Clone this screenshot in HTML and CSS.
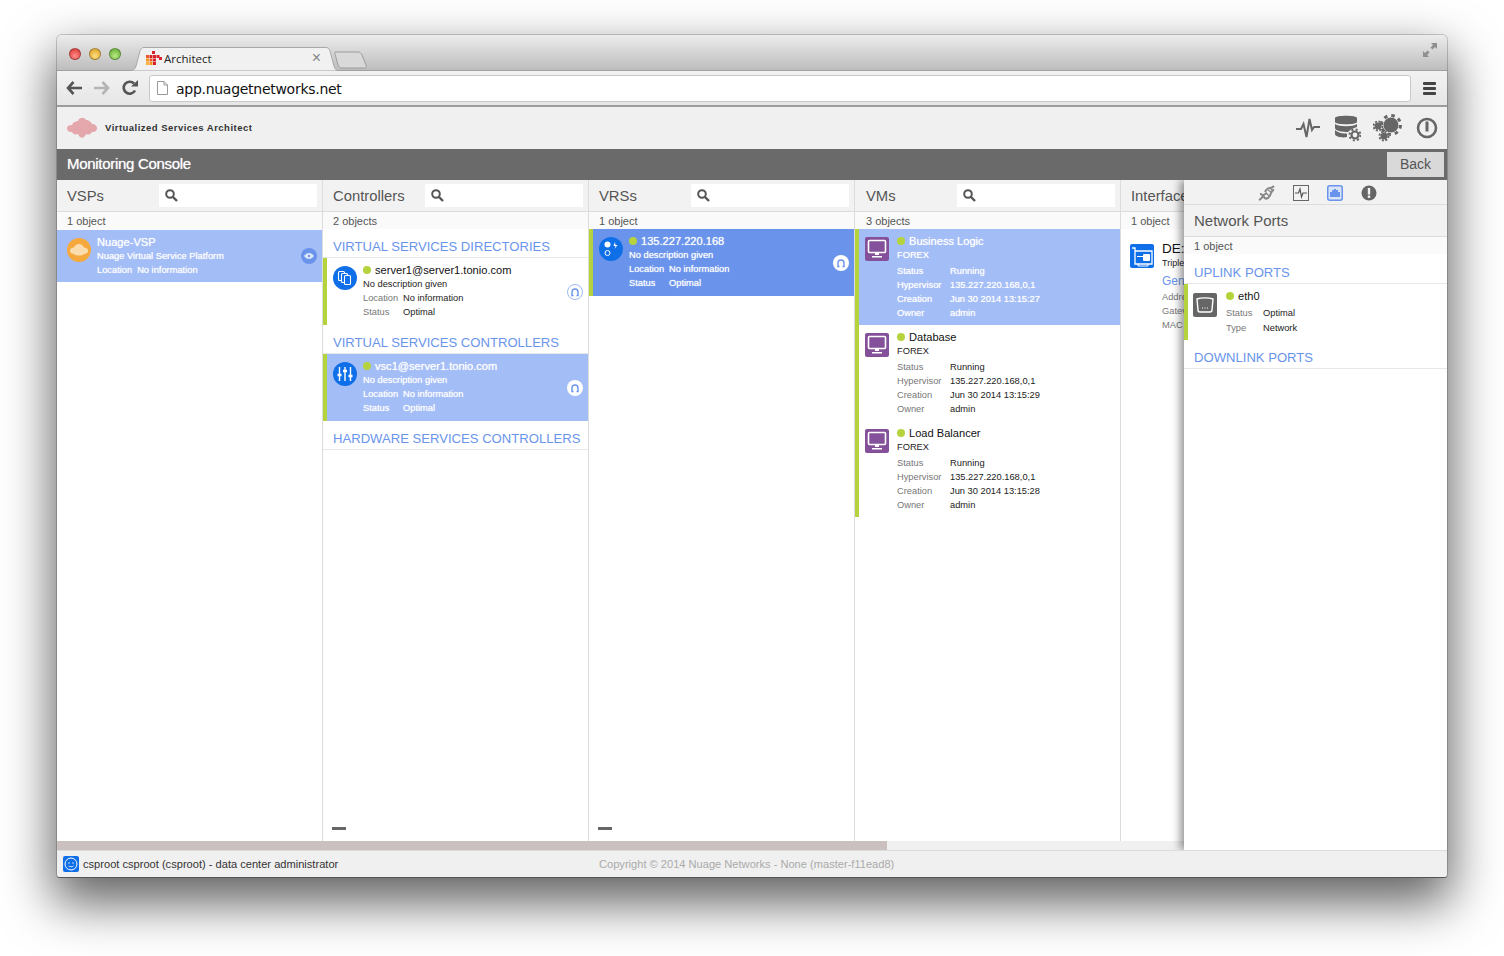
FILE: index.html
```html
<!DOCTYPE html>
<html lang="en">
<head>
<meta charset="utf-8">
<title>Architect</title>
<link rel="stylesheet" href="styles.css">
</head>
<body>
<div class="window">
  <div class="titlebar">
    <div class="lights"><i class="light red"></i><i class="light yellow"></i><i class="light green"></i></div>
    <div class="tab">
      <svg class="tab-shape" width="208" height="24" viewBox="0 0 208 24"><path d="M0 23.500C4 23.500 5 22 6 19L10 4C11 1.500 12 .5 14 .5H196C198 .5 199 1.500 200 4L204 19C205 22 206 23.500 208 23.500" fill="#f1f1f1" stroke="#a8a8a8"/></svg>
      <svg class="favicon" width="16" height="14" viewBox="0 0 16 14"><g fill="#d8232a"><rect x="6" y="0" width="3" height="3"/><rect x="0" y="4" width="3" height="3" fill="#f05a28"/><rect x="3.5" y="4" width="3" height="3"/><rect x="7" y="4" width="3" height="3"/><rect x="10.500" y="4" width="3" height="3"/><rect x="0" y="7.500" width="3" height="3" fill="#f7941d"/><rect x="3.500" y="7.500" width="3" height="3" fill="#f05a28"/><rect x="7" y="7.500" width="3" height="3"/><rect x="13" y="6" width="3" height="3"/><rect x="0" y="11" width="3" height="3" fill="#fbb040"/><rect x="3.500" y="11" width="3" height="3" fill="#f7941d"/><rect x="7" y="11" width="3" height="3" fill="#d8232a"/></g></svg>
      <span class="tab-title">Architect</span>
      <span class="tab-close">×</span>
    </div>
    <svg class="newtab" width="34" height="18" viewBox="0 0 34 18"><path d="M1 1H24C26 1 27 2 28 4L32 14C33 16 32 17 30 17H8C6 17 5 16 4 14L1 3C.6 2 .5 1 1 1Z" fill="#d9d9d9" stroke="#9c9c9c"/></svg>
    <svg class="fullscreen" width="14" height="14" viewBox="0 0 14 14"><path d="M8 0H14V6L12 4 9.500 6.500 7.500 4.500 10 2ZM6 14H0V8L2 10 4.500 7.500 6.500 9.500 4 12Z" fill="#8f8f8f"/></svg>
  </div>

  <div class="toolbar">
    <svg class="nav" width="16" height="14" viewBox="0 0 16 14"><path d="M7.500 1 2 7l5.500 6M2.500 7H16" fill="none" stroke="#555" stroke-width="2.600"/></svg>
    <svg class="nav" width="16" height="14" viewBox="0 0 16 14"><path d="M8.500 1 14 7l-5.500 6M13.500 7H0" fill="none" stroke="#b4b4b4" stroke-width="2.600"/></svg>
    <svg class="nav" width="16" height="16" viewBox="0 0 16 16"><path d="M13 10.500A6 6 0 1 1 12 3.500" fill="none" stroke="#555" stroke-width="2.600"/><path d="M9 6.500H16V0Z" fill="#555"/></svg>
    <div class="omnibox">
      <svg width="11" height="14" viewBox="0 0 11 14"><path d="M.5.500H7L10.500 4V13.500H.5ZM7 .5V4H10.500" fill="#fff" stroke="#9a9a9a"/></svg>
      <span class="url">app.nuagetnetworks.net</span>
    </div>
    <div class="menu"><i></i><i></i><i></i></div>
  </div>

  <header class="appbar">
    <svg class="logo" width="31" height="22" viewBox="0 0 31 22">
      <defs>
        <pattern id="dots" width="2" height="2" patternUnits="userSpaceOnUse"><rect x=".4" y=".4" width="1.200" height="1.200" fill="#cf2630"/></pattern>
      </defs>
      <path d="M0 11C0 9 2 8 5 8 6 5 9 4 11 4 12 0 18 0 19 3 22 3 24 5 25 7 28 7 30 9 30 11 30 14 28 15 25 15 23 18 21 18 19 17 17 22 13 22 11 17 8 18 6 17 5 15 2 15 0 14 0 11Z" fill="url(#dots)"/>
    </svg>
    <span class="brand">Virtualized Services Architect</span>
    <div class="app-icons">
      <svg width="26" height="22" viewBox="0 0 26 22"><path d="M1 12H6L8.500 7 11.500 20 14.500 2 17 13 19 10H25" fill="none" stroke="#666" stroke-width="2"/></svg>
      <svg class="db" width="27" height="28" viewBox="-1 0 27 28"><g fill="#666"><path d="M0 4C0 1 22 1 22 4V8C22 11 0 11 0 8Z"/><path d="M0 10C4 13 18 13 22 10V13C18 14 15 16 13 18 8 18 0 17 0 14Z"/><path d="M0 16C3 19 8 19.500 12 19.500L12 23C8 24 0 23 0 20Z"/></g><circle cx="20" cy="21" r="3.500" fill="none" stroke="#666" stroke-width="2.200"/><circle cx="20" cy="21" r="5.500" fill="none" stroke="#666" stroke-width="2" stroke-dasharray="2 2.320"/></svg>
      <svg width="30" height="28" viewBox="0 0 30 28"><circle cx="18" cy="11" r="7.500" fill="#666"/><circle cx="18" cy="11" r="9.500" fill="none" stroke="#666" stroke-width="3" stroke-dasharray="3.500 3.960"/><circle cx="5" cy="12" r="3.500" fill="#666"/><circle cx="5" cy="12" r="4.500" fill="none" stroke="#666" stroke-width="2" stroke-dasharray="2 1.530"/><circle cx="11" cy="22" r="3.500" fill="#666"/><circle cx="11" cy="22" r="4.500" fill="none" stroke="#666" stroke-width="2" stroke-dasharray="2 1.530"/></svg>
      <svg width="22" height="22" viewBox="0 0 22 22"><circle cx="11" cy="11" r="9" fill="none" stroke="#666" stroke-width="2.600"/><rect x="9.500" y="4.500" width="3" height="10" fill="#666"/></svg>
    </div>
  </header>

  <div class="consolebar">
    <h1 class="console-title">Monitoring Console</h1>
    <button class="back">Back</button>
  </div>

  <main class="board">
    <section class="col">
      <div class="col-head"><span class="col-title">VSPs</span><div class="search"><svg class="mag" width="13" height="13" viewBox="0 0 13 13"><circle cx="5" cy="5" r="3.800" fill="none" stroke="#555" stroke-width="2"/><path d="M8 8l4 4" stroke="#555" stroke-width="2.400"/></svg></div></div>
      <div class="count">1 object</div>
      <article class="item vsp selected">
        <svg class="ico" width="24" height="24" viewBox="0 0 24 24"><circle cx="12" cy="12" r="12" fill="#f5a83c"/><path d="M3 13C3 10 5 10 7 9.500 8 7 10 6 12 6 15 6 16 8 17 9.500 19 10 21 10 21 13 21 15 19 16 17 16 15 18 9 18 7 16 5 16 3 15 3 13Z" fill="#fbdcae"/></svg>
        <div class="body">
          <div class="name">Nuage-VSP</div>
          <div>Nuage Virtual Service Platform</div>
          <div><span class="k">Location</span>No information</div>
        </div>
        <span class="badge solid"><svg width="10" height="6" viewBox="0 0 10 6"><path d="M0 3C3-1 7-1 10 3 7 7 3 7 0 3Z" fill="#dfe8fb"/><circle cx="5" cy="3" r="1.200" fill="#6a94eb"/></svg></span>
      </article>
    </section>

    <section class="col">
      <div class="col-head"><span class="col-title">Controllers</span><div class="search"><svg class="mag" width="13" height="13" viewBox="0 0 13 13"><circle cx="5" cy="5" r="3.800" fill="none" stroke="#555" stroke-width="2"/><path d="M8 8l4 4" stroke="#555" stroke-width="2.400"/></svg></div></div>
      <div class="count short">2 objects</div>
      <h2 class="group">VIRTUAL SERVICES DIRECTORIES</h2>
      <article class="item barred">
        <svg class="ico" width="24" height="24" viewBox="0 0 24 24"><circle cx="12" cy="12" r="12" fill="#0f6fe8"/><g fill="#0f6fe8" stroke="#fff" stroke-width="1.100"><rect x="5.500" y="5.500" width="6" height="9" rx="1"/><rect x="8.500" y="7.500" width="6" height="9" rx="1"/><rect x="11.500" y="9.500" width="6" height="9" rx="1"/></g></svg>
        <div class="body">
          <div class="name"><i class="dot"></i>server1@server1.tonio.com</div>
          <div>No description given</div>
          <div><span class="k w40">Location</span>No information</div>
          <div><span class="k w40">Status</span>Optimal</div>
        </div>
        <span class="badge ring"><svg width="10" height="10" viewBox="0 0 10 10"><path d="M3.500 8.500H2V5A3 3 0 0 1 8 5V8.500H6.500" fill="none" stroke="currentColor" stroke-width="1.400"/></svg></span>
      </article>
      <h2 class="group">VIRTUAL SERVICES CONTROLLERS</h2>
      <article class="item barred selected">
        <svg class="ico" width="24" height="24" viewBox="0 0 24 24"><circle cx="12" cy="12" r="12" fill="#0f6fe8"/><path d="M6.500 5V19M12 5V19M17.500 5V19" stroke="#fff" stroke-width="1.400"/><path d="M4.500 13H8.500M10 9H14M15.500 14H19.500" stroke="#fff" stroke-width="2.400"/></svg>
        <div class="body">
          <div class="name"><i class="dot"></i>vsc1@server1.tonio.com</div>
          <div>No description given</div>
          <div><span class="k w40">Location</span>No information</div>
          <div><span class="k w40">Status</span>Optimal</div>
        </div>
        <span class="badge white"><svg width="10" height="10" viewBox="0 0 10 10"><path d="M3.500 8.500H2V5A3 3 0 0 1 8 5V8.500H6.500" fill="none" stroke="currentColor" stroke-width="1.400"/></svg></span>
      </article>
      <h2 class="group">HARDWARE SERVICES CONTROLLERS</h2>
      <div class="col-foot"><i class="minus"></i></div>
    </section>

    <section class="col">
      <div class="col-head"><span class="col-title">VRSs</span><div class="search"><svg class="mag" width="13" height="13" viewBox="0 0 13 13"><circle cx="5" cy="5" r="3.800" fill="none" stroke="#555" stroke-width="2"/><path d="M8 8l4 4" stroke="#555" stroke-width="2.400"/></svg></div></div>
      <div class="count short">1 object</div>
      <article class="item barred active">
        <svg class="ico" width="24" height="24" viewBox="0 0 24 24"><circle cx="12" cy="12" r="12" fill="#0f6fe8"/><circle cx="8.500" cy="7.500" r="3" fill="#fff"/><circle cx="8.500" cy="16" r="2.500" fill="none" stroke="#fff"/><path d="M16 5 14.500 9H16.500L15.500 12 18.500 8H16.500Z" fill="#fff"/></svg>
        <div class="body">
          <div class="name"><i class="dot"></i>135.227.220.168</div>
          <div>No description given</div>
          <div><span class="k w40">Location</span>No information</div>
          <div><span class="k w40">Status</span>Optimal</div>
        </div>
        <span class="badge white"><svg width="10" height="10" viewBox="0 0 10 10"><path d="M3.500 8.500H2V5A3 3 0 0 1 8 5V8.500H6.500" fill="none" stroke="currentColor" stroke-width="1.400"/></svg></span>
      </article>
      <div class="col-foot"><i class="minus"></i></div>
    </section>

    <section class="col vms">
      <div class="col-head"><span class="col-title">VMs</span><div class="search"><svg class="mag" width="13" height="13" viewBox="0 0 13 13"><circle cx="5" cy="5" r="3.800" fill="none" stroke="#555" stroke-width="2"/><path d="M8 8l4 4" stroke="#555" stroke-width="2.400"/></svg></div></div>
      <div class="count short">3 objects</div>
      <article class="item barred vm selected">
        <svg class="ico" width="24" height="24" viewBox="0 0 24 24"><rect width="24" height="24" rx="2" fill="#85509a"/><rect x="3.500" y="3.500" width="17" height="12" rx="1" fill="none" stroke="#fff" stroke-width="1.600"/><path d="M10 16h4v2h-4zM7 19h10v1.500H7z" fill="#fff"/></svg>
        <div class="body">
          <div class="name"><i class="dot"></i>Business Logic</div>
          <div class="sub">FOREX</div>
          <div><span class="k w53">Status</span>Running</div>
          <div><span class="k w53">Hypervisor</span>135.227.220.168,0,1</div>
          <div><span class="k w53">Creation</span>Jun 30 2014 13:15:27</div>
          <div><span class="k w53">Owner</span>admin</div>
        </div>
      </article>
      <article class="item barred vm">
        <svg class="ico" width="24" height="24" viewBox="0 0 24 24"><rect width="24" height="24" rx="2" fill="#85509a"/><rect x="3.500" y="3.500" width="17" height="12" rx="1" fill="none" stroke="#fff" stroke-width="1.600"/><path d="M10 16h4v2h-4zM7 19h10v1.500H7z" fill="#fff"/></svg>
        <div class="body">
          <div class="name"><i class="dot"></i>Database</div>
          <div class="sub">FOREX</div>
          <div><span class="k w53">Status</span>Running</div>
          <div><span class="k w53">Hypervisor</span>135.227.220.168,0,1</div>
          <div><span class="k w53">Creation</span>Jun 30 2014 13:15:29</div>
          <div><span class="k w53">Owner</span>admin</div>
        </div>
      </article>
      <article class="item barred vm">
        <svg class="ico" width="24" height="24" viewBox="0 0 24 24"><rect width="24" height="24" rx="2" fill="#85509a"/><rect x="3.500" y="3.500" width="17" height="12" rx="1" fill="none" stroke="#fff" stroke-width="1.600"/><path d="M10 16h4v2h-4zM7 19h10v1.500H7z" fill="#fff"/></svg>
        <div class="body">
          <div class="name"><i class="dot"></i>Load Balancer</div>
          <div class="sub">FOREX</div>
          <div><span class="k w53">Status</span>Running</div>
          <div><span class="k w53">Hypervisor</span>135.227.220.168,0,1</div>
          <div><span class="k w53">Creation</span>Jun 30 2014 13:15:28</div>
          <div><span class="k w53">Owner</span>admin</div>
        </div>
      </article>
    </section>

    <section class="col last">
      <div class="col-head"><span class="col-title">Interface</span></div>
      <div class="count short">1 object</div>
      <article class="iface">
        <svg class="ico" width="24" height="24" viewBox="0 0 24 24"><rect width="24" height="24" rx="2" fill="#0f6fe8"/><path d="M2 4H5V20H22V7H5" fill="none" stroke="#fff" stroke-width="1.300"/><rect x="13" y="10" width="7" height="7" rx="1" fill="#fff"/><path d="M7 12.500H13" stroke="#fff"/><path d="M8 20v2h10v-2" fill="none" stroke="#fff"/></svg>
        <div class="body">
          <div class="iface-name">DE:</div>
          <div class="iface-sub">Triple</div>
          <div class="iface-link">Gen</div>
          <div class="iface-k">Addre</div>
          <div class="iface-k">Gatev</div>
          <div class="iface-k">MAC</div>
        </div>
      </article>
    </section>

    <aside class="panel">
      <div class="panel-tabs">
        <svg width="17" height="16" viewBox="0 0 17 16"><g fill="none" stroke="#888"><path d="M1 15C3 14 4 13 5 11 6 9 7 9 9 8" stroke-width="2"/><path d="M2 9C4 9 5 10 6 12 7 14 8 14 10 13 12 12 12 10 13 8 14 6 15 5 16 4.500" stroke-width="2"/><path d="M7 7C8 5 9 3 12 3 14 3 15 2 16 1" stroke-width="2"/><path d="M8 8l3 3M10 5l3 2M12 3l2 2" stroke-width="1.200"/></g></svg>
        <svg width="16" height="16" viewBox="0 0 16 16"><rect x=".5" y=".5" width="15" height="15" fill="#f2f2f2" stroke="#666"/><path d="M2 8H5.500L7 4 8.500 12 10 8H14" fill="none" stroke="#555" stroke-width="1.200"/></svg>
        <svg width="16" height="16" viewBox="0 0 16 16"><rect x=".75" y=".75" width="14.500" height="14.500" rx="2" fill="#d9e4fa" stroke="#6a94eb" stroke-width="1.500"/><path d="M3 12V7H5V5H7V4H9V5H11V7H13V12Z" fill="#6a94eb"/></svg>
        <svg width="16" height="16" viewBox="0 0 16 16"><circle cx="8" cy="8" r="7.500" fill="#666"/><rect x="6.800" y="3" width="2.400" height="6.500" fill="#f2f2f2"/><rect x="6.800" y="10.500" width="2.400" height="2.400" fill="#f2f2f2"/></svg>
      </div>
      <div class="panel-title">Network Ports</div>
      <div class="count panel-count">1 object</div>
      <h2 class="group">UPLINK PORTS</h2>
      <article class="port">
        <svg class="ico" width="24" height="24" viewBox="0 0 24 24"><rect width="24" height="24" rx="2" fill="#666"/><path d="M4 6C8 4.500 16 4.500 20 6L19 17C19 18 18 19 17 19H7C6 19 5 18 5 17Z" fill="none" stroke="#fff" stroke-width="1.400"/><path d="M9 15h1M11.500 15h1M14 15h1" stroke="#fff"/></svg>
        <div class="body">
          <div class="name"><i class="dot"></i>eth0</div>
          <div class="port-row"><span class="k w37">Status</span>Optimal</div>
          <div class="port-row"><span class="k w37">Type</span>Network</div>
        </div>
      </article>
      <h2 class="group down">DOWNLINK PORTS</h2>
    </aside>
  </main>

  <div class="hscroll"><div class="thumb"></div></div>

  <footer class="footer">
    <svg class="user" width="16" height="16" viewBox="0 0 16 16"><rect width="16" height="16" rx="2" fill="#0f6fe8"/><circle cx="8" cy="8" r="6" fill="none" stroke="#fff"/><circle cx="6" cy="7" r=".7" fill="#fff"/><circle cx="10" cy="7" r=".7" fill="#fff"/><path d="M5.500 10C6.500 11 9.500 11 10.500 10" fill="none" stroke="#fff" stroke-width=".8"/></svg>
    <span class="who">csproot csproot (csproot) - data center administrator</span>
    <span class="copy">Copyright © 2014 Nuage Networks - None (master-f11ead8)</span>
  </footer>
</div>
</body>
</html>
```

FILE: styles.css
```css
* { box-sizing: border-box; }
html, body { margin: 0; height: 100%; background: #fff; overflow: hidden; }
body { padding: 35px 57px 0; font-family: "Liberation Sans", Arial, sans-serif; color: #222; }

.window {
  width: 1390px;
  height: 842px;
  display: flex;
  flex-direction: column;
  border-radius: 5px 5px 3px 3px;
  background: #f0f0f0;
  box-shadow: 0 1px 0 #555, 0 22px 50px 4px rgba(0,0,0,.62), 0 0 0 1px rgba(0,0,0,.18);
  overflow: hidden;
}

/* browser chrome */
.titlebar {
  height: 36px;
  flex: none;
  display: flex;
  align-items: flex-end;
  padding-left: 12px;
  background: linear-gradient(#ececec, #bdbdbd);
  border-bottom: 1px solid #a0a0a0;
}
.lights { display: flex; gap: 8px; align-self: flex-start; margin-top: 13px; }
.light { width: 12px; height: 12px; border-radius: 50%; border: 1px solid rgba(0,0,0,.3); }
.red { background: radial-gradient(circle at 50% 70%, #ff8f8a, #d8302c); }
.yellow { background: radial-gradient(circle at 50% 70%, #ffdf80, #d99a1f); }
.green { background: radial-gradient(circle at 50% 70%, #b9ea82, #5da92f); }

.tab {
  position: relative;
  width: 208px;
  height: 24px;
  margin-left: 9px;
  margin-bottom: -1px;
  padding: 0 12px 2px 16px;
  display: flex;
  align-items: center;
}
.tab-shape { position: absolute; left: 0; top: 0; }
.favicon { position: relative; flex: none; }
.tab-title { position: relative; margin-left: 2px; font: 11.500px "Open Sans", sans-serif; color: #222; }
.tab-close { position: relative; margin-left: auto; margin-right: 5px; font: 16px "Liberation Sans", sans-serif; color: #888; }
.newtab { flex: none; margin: 0 0 1px -4px; align-self: flex-end; }
.fullscreen { margin: 0 10px 13px auto; }

.toolbar {
  height: 36px;
  flex: none;
  display: flex;
  align-items: center;
  padding: 0 11px 0 9px;
  gap: 12px;
  background: linear-gradient(#f2f2f2, #e6e6e6);
  border-bottom: 2px solid #9c9c9c;
}
.nav { flex: none; }
.omnibox {
  flex: 1;
  height: 27px;
  margin-left: -1px;
  display: flex;
  align-items: center;
  gap: 9px;
  padding-left: 7px;
  background: #fff;
  border: 1px solid #c8c8c8;
  border-radius: 3px;
}
.url { padding: 1px 0 0; margin-left: -1px; font: 14px "DejaVu Sans", sans-serif; color: #111; letter-spacing: -.02em; }
.menu { display: flex; flex-direction: column; gap: 2px; width: 13px; }
.menu i { height: 3px; background: #444; border-radius: 1px; }

/* app */
.appbar {
  height: 42px;
  flex: none;
  display: flex;
  align-items: center;
  padding: 0 9px 0 10px;
  background: #f0f0f0;
}
.logo { flex: none; }
.brand { margin: -2px 0 0 7px; font-size: 9.500px; font-weight: bold; letter-spacing: .05em; color: #333; }
.app-icons { margin-left: auto; display: flex; align-items: center; gap: 13px; }
.db { margin-right: -1px; }

.consolebar {
  height: 31px;
  flex: none;
  display: flex;
  align-items: center;
  justify-content: space-between;
  padding: 0 3px 0 10px;
  background: #6a6a6a;
}
.console-title { margin: 0 0 2px; font-size: 15px; font-weight: normal; letter-spacing: -.02em; color: #fff; text-shadow: 0 0 1px rgba(255,255,255,.7); }
.back {
  width: 57px;
  height: 25px;
  margin-bottom: 1px;
  border: 0;
  padding: 0;
  background: #d9d9d9;
  color: #555;
  font: 14px "Liberation Sans", sans-serif;
}

.board { position: relative; flex: 1; min-height: 0; display: flex; background: #fff; }
.col {
  width: 266px;
  flex: none;
  display: flex;
  flex-direction: column;
  border-right: 1px solid #dcdcdc;
}
.col.last { border-right: 0; flex: 1; min-width: 0; overflow: hidden; }
.col-head {
  height: 32px;
  flex: none;
  display: flex;
  align-items: center;
  justify-content: space-between;
  padding: 0 5px 0 10px;
  background: #f2f2f2;
  border-bottom: 1px solid #dcdcdc;
}
.col-title { font-size: 14.800px; color: #555; white-space: nowrap; }
.search { width: 158px; height: 23px; display: flex; align-items: center; padding-left: 6px; background: #fff; }
.mag { flex: none; }
.count { height: 18px; flex: none; padding-left: 10px; font-size: 11px; line-height: 18px; color: #555; background: #fafafa; }
.count.short { height: 17px; }
.vms .col-head, .vms .count { padding-left: 11px; }

.group {
  margin: 0;
  height: 29px;
  flex: none;
  padding: 9px 0 0 10px;
  font-size: 13.100px;
  line-height: 18px;
  font-weight: normal;
  color: #6a94eb;
  white-space: nowrap;
  border-bottom: 1px solid #e8e8e8;
}
.item {
  position: relative;
  flex: none;
  display: flex;
  padding: 5px 6px 6px 10px;
  font-size: 9.300px;
  line-height: 14px;
  color: #222;
}
.item.vsp { height: 52px; padding-top: 5px; }
.item.barred { height: 67px; border-left: 4px solid #b5d33d; padding-left: 6px; }
.item.vm { height: 96px; }
.vm .body { margin-left: 8px; }
.ico { flex: none; margin-top: 3px; }
.body { margin-left: 6px; min-width: 0; white-space: nowrap; }
.name { font-size: 11.100px; color: #111; display: flex; align-items: center; }
.dot { width: 8px; height: 8px; margin-right: 4px; border-radius: 50%; background: #b5d33d; flex: none; }
.k { display: inline-block; margin-right: 5px; color: #777; }
.w40 { width: 35px; }
.w53 { width: 48px; }
.w37 { width: 32px; }
.sub { margin-bottom: 2px; }

.selected { background: #a3bdf7; }
.active { background: #6a94eb; }
.selected, .selected .name, .selected .k, .active, .active .name, .active .k {
  color: #fff;
  text-shadow: 0 0 1px rgba(255,255,255,.8);
}

.badge {
  position: absolute;
  right: 5px;
  top: 50%;
  width: 16px;
  height: 16px;
  margin-top: -8px;
  display: flex;
  align-items: center;
  justify-content: center;
  border-radius: 50%;
}
.badge.solid { background: #6a94eb; }
.badge.ring { background: #fff; border: 1px solid #9db9f3; color: #6a94eb; }
.badge.white { background: #fff; color: #6a94eb; }

.col-foot { margin-top: auto; padding: 0 0 11px 9px; }
.minus { display: block; width: 14px; height: 3px; background: #666; }

.iface { display: flex; padding: 12px 0 0 9px; }
.iface .body { margin-left: 8px; }
.iface-name { font-size: 13.500px; line-height: 16px; color: #111; }
.iface-sub { font-size: 9px; line-height: 13px; color: #222; }
.iface-link { font-size: 12px; line-height: 14px; margin-top: 4px; color: #6a94eb; }
.iface-k { font-size: 9.300px; line-height: 14px; color: #777; }
.iface-link + .iface-k { margin-top: 2px; }

.panel {
  position: absolute;
  right: 0;
  top: 0;
  bottom: -9px;
  width: 263px;
  background: #fff;
  box-shadow: -4px 0 8px rgba(0,0,0,.4);
  clip-path: inset(0 0 0 -14px);
}
.panel-tabs {
  height: 25px;
  display: flex;
  justify-content: center;
  align-items: center;
  gap: 18px;
  padding: 1px 0 0 4px;
  background: #f2f2f2;
  border-bottom: 1px solid #dcdcdc;
}
.panel-title { height: 32px; padding-left: 10px; font-size: 15px; line-height: 32px; color: #555; background: #f2f2f2; border-bottom: 1px solid #dcdcdc; }
.panel-count { height: 17px; }
.panel .group { height: 30px; padding-top: 10px; }
.port { height: 56px; display: flex; padding: 5px 0 0 5px; border-left: 4px solid #b5d33d; font-size: 9.300px; line-height: 14px; }
.port .ico { margin-top: 4px; }
.port .body { margin-left: 9px; }
.port-row { line-height: 15px; }
.port .name { margin-bottom: 3px; }
.panel .group.down { height: 29px; padding-top: 9px; }

.hscroll { height: 10px; flex: none; background: #f0f0f0; border-bottom: 1px solid #dcdcdc; }
.thumb { width: 830px; height: 9px; background: #c9c0bf; }

.footer {
  height: 26px;
  flex: none;
  display: flex;
  align-items: center;
  padding: 0 0 1px 6px;
  background: #f0f0f0;
  font-size: 11.100px;
}
.user { flex: none; }
.who { margin-left: 4px; width: 516px; color: #333; white-space: nowrap; }
.copy { color: #aaa; white-space: nowrap; }
```
